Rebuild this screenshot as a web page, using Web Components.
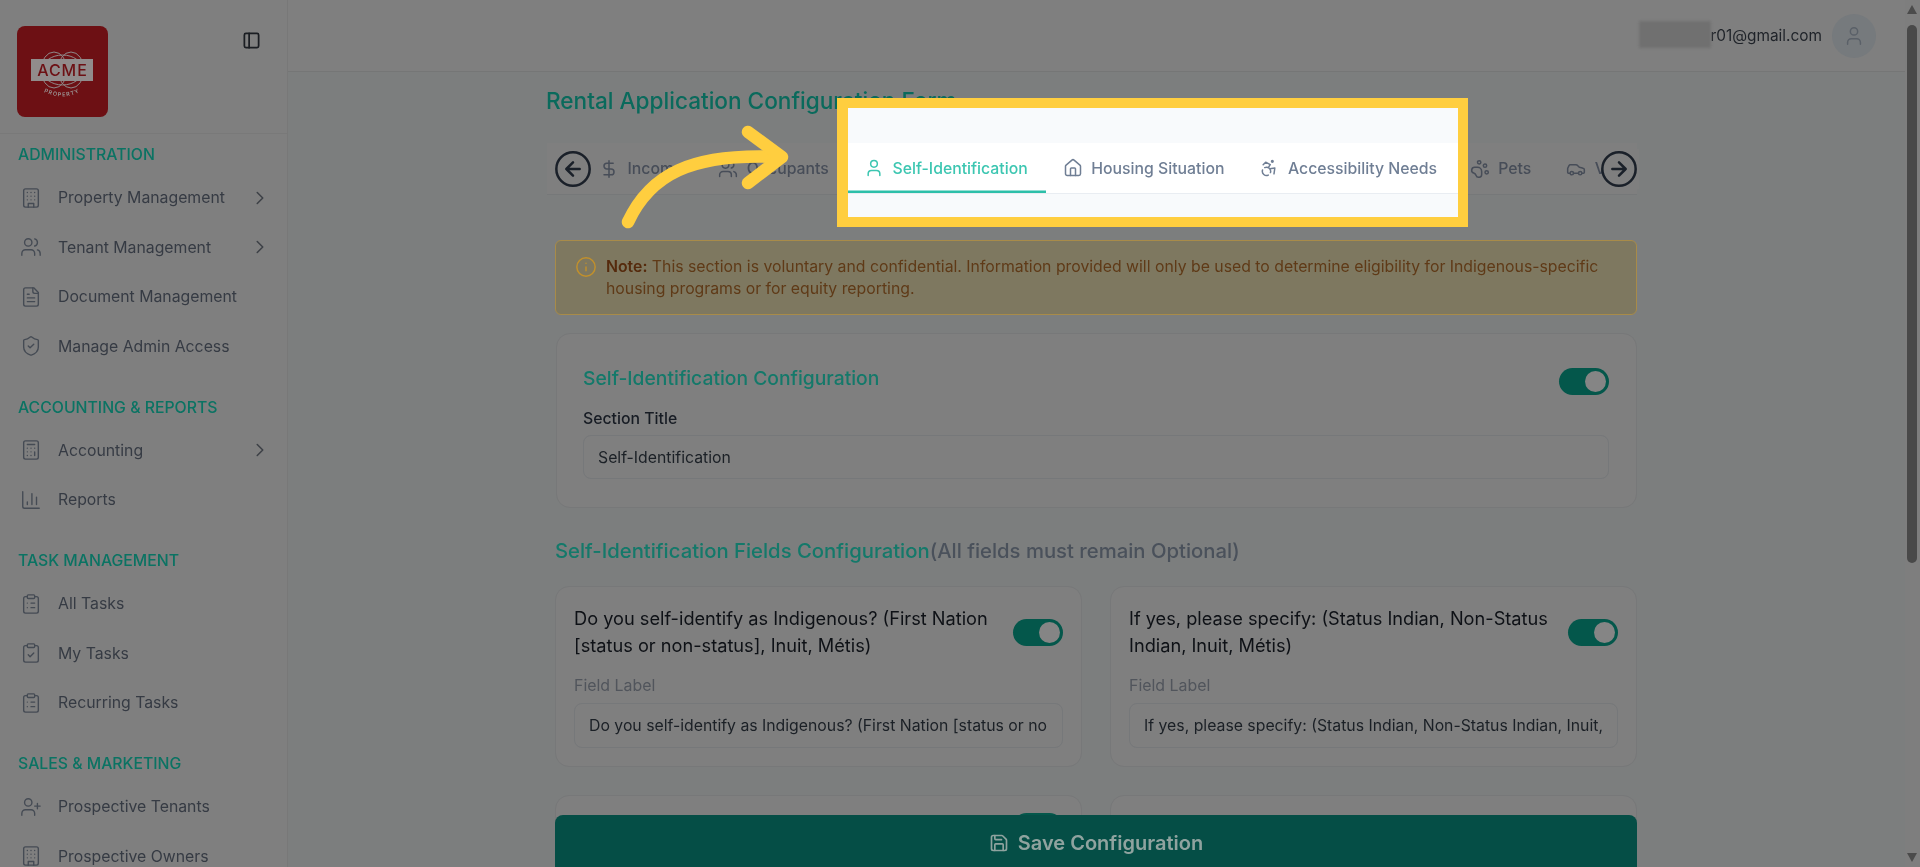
<!DOCTYPE html>
<html lang="en">
<head>
<meta charset="utf-8">
<title>Rental Application Configuration Form</title>
<style>
  html, body { margin: 0; height: 100%; overflow: hidden; background: #7c7e7e; }
  body { font-family: Inter, "Liberation Sans", sans-serif; filter: blur(0.35px); }
</style>
</head>
<body>
<app-shell>
  <app-sidebar slot="sidebar">
    <nav-section title="ADMINISTRATION">
      <nav-item icon="building" more>Property Management</nav-item>
      <nav-item icon="users" more>Tenant Management</nav-item>
      <nav-item icon="file">Document Management</nav-item>
      <nav-item icon="shield">Manage Admin Access</nav-item>
    </nav-section>
    <nav-section title="ACCOUNTING &amp; REPORTS">
      <nav-item icon="calculator" more>Accounting</nav-item>
      <nav-item icon="chart">Reports</nav-item>
    </nav-section>
    <nav-section title="TASK MANAGEMENT">
      <nav-item icon="clipboard">All Tasks</nav-item>
      <nav-item icon="clipcheck">My Tasks</nav-item>
      <nav-item icon="clipboard">Recurring Tasks</nav-item>
    </nav-section>
    <nav-section title="SALES &amp; MARKETING">
      <nav-item icon="userplus">Prospective Tenants</nav-item>
      <nav-item icon="building">Prospective Owners</nav-item>
    </nav-section>
  </app-sidebar>

  <app-header slot="header" email="r01@gmail.com"></app-header>

  <page-title>Rental Application Configuration Form</page-title>

  <tab-strip>
    <config-tab icon="dollar">Income</config-tab>
    <config-tab icon="users">Occupants</config-tab>
    <tab-gap></tab-gap>
    <config-tab icon="paw">Pets</config-tab>
    <config-tab icon="car">Vehicles</config-tab>
  </tab-strip>

  <note-banner><b>Note:</b> This section is voluntary and confidential. Information provided will only be used to determine eligibility for Indigenous-specific housing programs or for equity reporting.</note-banner>

  <section-card heading="Self-Identification Configuration" value="Self-Identification"></section-card>

  <fields-heading><span>Self-Identification Fields Configuration</span>(All fields must remain Optional)</fields-heading>

  <fields-grid>
    <field-card label="Do you self-identify as Indigenous? (First Nation [status or non-status], Inuit, Métis)"></field-card>
    <field-card label="If yes, please specify: (Status Indian, Non-Status Indian, Inuit, Métis)"></field-card>
    <field-card toggle></field-card>
    <field-card></field-card>
  </fields-grid>

  <save-bar slot="footer">Save Configuration</save-bar>
</app-shell>

<callout-frame>
  <config-tab icon="user" bright active>Self-Identification</config-tab>
  <config-tab icon="house" bright>Housing Situation</config-tab>
  <config-tab icon="accessibility" bright>Accessibility Needs</config-tab>
</callout-frame>

<script>
(function() {
  'use strict';

  var ICONS = {
    building: '<rect x="4" y="2" width="16" height="20" rx="2"/><path d="M9 22v-4h6v4M8 6h.01M16 6h.01M12 6h.01M12 10h.01M12 14h.01M16 10h.01M16 14h.01M8 10h.01M8 14h.01"/>',
    users: '<path d="M16 21v-2a4 4 0 0 0-4-4H6a4 4 0 0 0-4 4v2"/><circle cx="9" cy="7" r="4"/><path d="M22 21v-2a4 4 0 0 0-3-3.87M16 3.13a4 4 0 0 1 0 7.75"/>',
    file: '<path d="M15 2H6a2 2 0 0 0-2 2v16a2 2 0 0 0 2 2h12a2 2 0 0 0 2-2V7Z"/><path d="M14 2v4a2 2 0 0 0 2 2h4M10 9H8M16 13H8M16 17H8"/>',
    shield: '<path d="M20 13c0 5-3.5 7.5-7.66 8.95a1 1 0 0 1-.67-.01C7.5 20.5 4 18 4 13V6a1 1 0 0 1 1-1c2 0 4.5-1.2 6.24-2.72a1.17 1.17 0 0 1 1.52 0C14.51 3.81 17 5 19 5a1 1 0 0 1 1 1z"/><path d="m9 12 2 2 4-4"/>',
    calculator: '<rect x="4" y="2" width="16" height="20" rx="2"/><path d="M8 6h8M16 14v4M16 10h.01M12 10h.01M8 10h.01M12 14h.01M8 14h.01M12 18h.01M8 18h.01"/>',
    chart: '<path d="M3 3v16a2 2 0 0 0 2 2h16M18 17V9M13 17V5M8 17v-3"/>',
    clipboard: '<rect x="8" y="2" width="8" height="4" rx="1"/><path d="M16 4h2a2 2 0 0 1 2 2v14a2 2 0 0 1-2 2H6a2 2 0 0 1-2-2V6a2 2 0 0 1 2-2h2M12 11h4M12 16h4M8 11h.01M8 16h.01"/>',
    clipcheck: '<rect x="8" y="2" width="8" height="4" rx="1"/><path d="M16 4h2a2 2 0 0 1 2 2v14a2 2 0 0 1-2 2H6a2 2 0 0 1-2-2V6a2 2 0 0 1 2-2h2M9 14l2 2 4-4"/>',
    userplus: '<path d="M16 21v-2a4 4 0 0 0-4-4H6a4 4 0 0 0-4 4v2"/><circle cx="9" cy="7" r="4"/><path d="M19 8v6M22 11h-6"/>',
    user: '<path d="M19 21v-2a4 4 0 0 0-4-4H9a4 4 0 0 0-4 4v2"/><circle cx="12" cy="7" r="4"/>',
    chevron: '<path d="m9 18 6-6-6-6"/>',
    panel: '<rect x="3" y="3" width="18" height="18" rx="2"/><path d="M9 3v18"/>',
    dollar: '<path d="M12 2v20M17 5H9.5a3.5 3.5 0 0 0 0 7h5a3.5 3.5 0 0 1 0 7H6"/>',
    house: '<path d="M15 21v-8a1 1 0 0 0-1-1h-4a1 1 0 0 0-1 1v8"/><path d="M3 10a2 2 0 0 1 .709-1.528l7-5.999a2 2 0 0 1 2.582 0l7 5.999A2 2 0 0 1 21 10v9a2 2 0 0 1-2 2H5a2 2 0 0 1-2-2z"/>',
    accessibility: '<circle cx="16" cy="4" r="1"/><path d="m18 19 1-7-6 1M5 8l3-3 5.5 3-2.36 3.5M4.24 14.5a5 5 0 0 0 6.88 6M13.76 17.5a5 5 0 0 0-6.88-6"/>',
    paw: '<circle cx="11" cy="4" r="2"/><circle cx="18" cy="8" r="2"/><circle cx="20" cy="16" r="2"/><path d="M9 10a5 5 0 0 1 5 5v3.5a3.5 3.5 0 0 1-6.84 1.045Q6.52 17.48 4.46 16.84A3.5 3.5 0 0 1 5.5 10Z"/>',
    car: '<path d="M19 17h2c.6 0 1-.4 1-1v-3c0-.9-.7-1.7-1.5-1.9C18.7 10.6 16 10 16 10s-1.3-1.4-2.2-2.3c-.5-.4-1.1-.7-1.8-.7H5c-.6 0-1.1.4-1.4.9l-1.4 2.9A3.7 3.7 0 0 0 2 12v4c0 .6.4 1 1 1h2"/><circle cx="7" cy="17" r="2"/><path d="M9 17h6"/><circle cx="17" cy="17" r="2"/>',
    arrowleft: '<circle cx="12" cy="12" r="10"/><path d="m12 8-4 4 4 4M16 12H8"/>',
    arrowright: '<circle cx="12" cy="12" r="10"/><path d="m12 16 4-4-4-4M8 12h8"/>',
    info: '<circle cx="12" cy="12" r="10"/><path d="M12 16v-4M12 8h.01"/>',
    save: '<path d="M15.2 3a2 2 0 0 1 1.4.6l3.8 3.8a2 2 0 0 1 .6 1.4V19a2 2 0 0 1-2 2H5a2 2 0 0 1-2-2V5a2 2 0 0 1 2-2z"/><path d="M17 21v-7a1 1 0 0 0-1-1H8a1 1 0 0 0-1 1v7M7 3v4a1 1 0 0 0 1 1h7"/>'
  };

  function icon(name, size, width) {
    return '<svg xmlns="http://www.w3.org/2000/svg" width="' + size + '" height="' + size + '" viewBox="0 0 24 24" fill="none" stroke="currentColor" stroke-width="' + (width || 2) + '" stroke-linecap="round" stroke-linejoin="round" style="display:block;flex:none">' + ICONS[name] + '</svg>';
  }

  // small helper so each element below only declares its markup
  function define(tag, render, setup) {
    customElements.define(tag, class extends HTMLElement {
      constructor() {
        super();
        this.attachShadow({ mode: 'open' });
      }
      connectedCallback() {
        this.shadowRoot.innerHTML = render(this);
        if (setup) setup(this);
      }
    });
  }

  define('app-shell', function() {
    return '<style>' +
      ':host { display: grid; grid-template-columns: 288px 1fr 15px; grid-template-rows: 72px 1fr; height: 867px; overflow: hidden; color: #22272e; position: relative; }' +
      '.side { grid-row: 1 / 3; min-height: 0; overflow: hidden; }' +
      '.head { grid-column: 2; }' +
      '.main { grid-column: 2; grid-row: 2; padding: 0 268px 0 259px; min-height: 0; overflow: hidden; display: flex; flex-direction: column; }' +
      '::slotted(*) { flex: none; }' +
      '.bar { grid-column: 3; grid-row: 1 / 3; background: #7e7e7e; display: flex; flex-direction: column; align-items: center; position: relative; }' +
      '.up { margin: 5px 0 0 -1px; width: 0; height: 0; border: 5.5px solid transparent; border-top: 0; border-bottom: 9px solid #4b4b4b; }' +
      '.thumb { margin: 11px 0 0 -1px; width: 10px; height: 538px; border-radius: 5px; background: #494949; }' +
      '.down { position: absolute; left: 2px; bottom: 5px; width: 0; height: 0; border: 5.5px solid transparent; border-bottom: 0; border-top: 9px solid #4b4b4b; }' +
      '</style>' +
      '<div class="side"><slot name="sidebar"></slot></div>' +
      '<div class="head"><slot name="header"></slot></div>' +
      '<div class="main"><slot></slot></div>' +
      '<div class="bar"><div class="up"></div><div class="thumb"></div><div class="down"></div></div>' +
      '<slot name="footer"></slot>';
  });

  define('app-sidebar', function() {
    return '<style>' +
      ':host { display: block; height: 867px; background: #7f7f7f; border-right: 1px solid #787878; box-sizing: border-box; }' +
      '.top { height: 134px; box-sizing: border-box; border-bottom: 1px solid #797979; padding: 26px 0 0 17px; display: flex; justify-content: space-between; }' +
      '.logo { width: 91px; height: 91px; border-radius: 8px; display: block; }' +
      '.toggle { color: #1b1e23; margin: 5px 26px 0 0; }' +
      '</style>' +
      '<div class="top">' +
      '<svg class="logo" viewBox="0 0 91 91" font-family="Inter, Liberation Sans, sans-serif">' +
      '<rect width="91" height="91" fill="#6d1014"/>' +
      '<g fill="none" stroke="#8f8a8a" stroke-width="1"><ellipse cx="37" cy="44" rx="13" ry="18"/><ellipse cx="54" cy="44" rx="13" ry="18"/><ellipse cx="45.5" cy="44" rx="20" ry="15"/></g>' +
      '<rect x="14" y="33" width="62" height="22" fill="#918c8c"/>' +
      '<text x="45.5" y="50" text-anchor="middle" font-size="16" font-weight="500" letter-spacing="1" fill="#6d1014">ACME</text>' +
      '<path id="arc" d="M25 65 Q45 76 65 65" fill="none"/>' +
      '<text font-size="5.6" font-weight="600" letter-spacing="1" fill="#9a9292"><textPath href="#arc" startOffset="50%" text-anchor="middle">PROPERTY</textPath></text>' +
      '</svg>' +
      '<div class="toggle">' + icon('panel', 19, 2.2) + '</div>' +
      '</div><slot></slot>';
  });

  define('nav-section', function(el) {
    return '<style>' +
      ':host { display: block; padding-top: 11px; margin-bottom: 15.5px; }' +
      '.t { height: 19px; line-height: 19px; margin: 0 0 9px 18px; font-size: 15.8px; font-weight: 500; color: #0b7363; white-space: nowrap; }' +
      '</style><div class="t">' + el.getAttribute('title') + '</div><slot></slot>';
  });

  define('nav-item', function(el) {
    return '<style>' +
      ':host { display: flex; align-items: center; height: 49.5px; padding-left: 20px; font-size: 15.8px; color: #363b44; white-space: nowrap; }' +
      '.i { width: 22px; margin-right: 16px; color: #454b54; }' +
      '.c { position: absolute; left: 249px; color: #3d4147; }' +
      '</style><span class="i">' + icon(el.getAttribute('icon'), 22, 1.5) + '</span><slot></slot>' +
      (el.hasAttribute('more') ? '<span class="c">' + icon('chevron', 22, 1.7) + '</span>' : '');
  });

  define('app-header', function(el) {
    return '<style>' +
      ':host { display: flex; justify-content: flex-end; align-items: center; gap: 10px; height: 72px; box-sizing: border-box; background: #7f7f7f; border-bottom: 1px solid #757676; padding-right: 29px; }' +
      '.mail { position: relative; font-size: 15.4px; color: #1f2329; padding-left: 71px; }' +
      '.mail i { position: absolute; left: 0; top: -5px; width: 72px; height: 27px; background: #707070; filter: blur(1.5px); }' +
      '.av { width: 44px; height: 44px; border-radius: 50%; background: #767a7d; color: #5a6068; display: flex; align-items: center; justify-content: center; }' +
      '</style><span class="mail">' + el.getAttribute('email') + '<i></i></span>' +
      '<span class="av">' + icon('user', 22, 1.6) + '</span>';
  });

  define('page-title', function() {
    return '<style>' +
      ':host { display: block; margin: 14px 0 0 -1px; height: 29px; line-height: 29px; font-size: 22.6px; font-weight: 500; color: #0a6a5c; white-space: nowrap; }' +
      '</style><slot></slot>';
  });

  define('tab-strip', function() {
    return '<style>' +
      ':host { display: block; position: relative; margin-top: 28px; height: 52px; box-sizing: border-box; background: #7f7f7f; border-bottom: 1px solid #767879; }' +
      '.row { display: flex; height: 51px; padding-left: 35px; overflow: hidden; }' +
      'span { position: absolute; top: 6px; color: #1a2029; }' +
      '.l { left: 6px; }' +
      '.r { right: -2px; background: linear-gradient(to right, transparent 4px, #7f7f7f 4px); }' +
      '</style><div class="row"><slot></slot></div>' +
      '<span class="l">' + icon('arrowleft', 40, 1.5) + '</span>' +
      '<span class="r">' + icon('arrowright', 40, 1.5) + '</span>';
  });

  define('tab-gap', function() {
    return '<style>:host { display: block; flex: none; width: 606px; }</style>';
  });

  define('config-tab', function(el) {
    var active = el.hasAttribute('active');
    var bright = el.hasAttribute('bright');
    var color = active ? '#3cc6b1' : (bright ? '#6f7e94' : '#474d58');
    return '<style>' +
      ':host { display: flex; flex: none; align-items: center; gap: 8.5px; height: 100%; box-sizing: border-box; padding: 0 18px 0 17px; font-size: 15.8px; font-weight: 500; white-space: nowrap; color: ' + color + ';' +
      (active ? ' box-shadow: inset 0 -2.5px 0 #2dbfa9; margin-left: -1px;' : '') + ' }' +
      '</style>' + icon(el.getAttribute('icon'), 20, 1.8) + '<slot></slot>';
  });

  define('note-banner', function() {
    return '<style>' +
      ':host { display: flex; gap: 9px; margin: 45px 0 0 8px; padding: 15px 24px 0 19px; height: 75px; box-sizing: border-box; background: #7e7860; border: 1px solid #a88b49; border-radius: 6px; font-size: 15.8px; line-height: 22px; color: #5f3a17; }' +
      '.i { color: #c1902c; }' +
      '::slotted(b) { color: #552a0c; font-weight: 600; }' +
      '</style><span class="i">' + icon('info', 22, 1.6) + '</span><div><slot></slot></div>';
  });

  define('toggle-switch', function() {
    return '<style>' +
      ':host { display: block; flex: none; width: 50px; height: 27px; border-radius: 14px; background: #04574b; position: relative; }' +
      'i { position: absolute; right: 3px; top: 3px; width: 21px; height: 21px; border-radius: 50%; background: #858585; }' +
      '</style><i></i>';
  });

  define('section-card', function(el) {
    return '<style>' +
      ':host { display: block; margin: 18px 0 0 9px; height: 175px; box-sizing: border-box; background: #7f7f7f; border: 1px solid #777879; border-radius: 14px; padding: 34px 27px 0 26px; }' +
      '.top { display: flex; justify-content: space-between; height: 30px; }' +
      'h2 { margin: 0; font-size: 19.3px; line-height: 20px; font-weight: 500; color: #14796a; }' +
      'label { display: block; margin-top: 11px; font-size: 15.8px; line-height: 20px; font-weight: 500; color: #171c24; }' +
      'input { display: block; width: 100%; height: 44px; box-sizing: border-box; margin-top: 6px; padding: 0 14px; background: #7f7f7f; border: 1px solid #76787a; border-radius: 8px; font: 15.8px Inter, "Liberation Sans", sans-serif; color: #1b2026; outline: none; }' +
      '</style><div class="top"><h2>' + el.getAttribute('heading') + '</h2><toggle-switch></toggle-switch></div>' +
      '<label>Section Title</label><input value="' + el.getAttribute('value') + '">';
  });

  define('fields-heading', function() {
    return '<style>' +
      ':host { display: block; margin: 32px 0 0 8px; height: 22px; line-height: 22px; font-size: 20.3px; font-weight: 500; color: #4a515b; white-space: nowrap; }' +
      '::slotted(span) { color: #14796a; }' +
      '</style><slot></slot>';
  });

  define('fields-grid', function() {
    return '<style>' +
      ':host { display: grid; grid-template-columns: 1fr 1fr; gap: 28px; margin: 24px 0 0 8px; }' +
      '</style><slot></slot>';
  });

  define('field-card', function(el) {
    var label = el.getAttribute('label');
    var body = label ?
      '<div class="top"><p>' + label + '</p><toggle-switch></toggle-switch></div><label>Field Label</label><input>' :
      (el.hasAttribute('toggle') ? '<div class="top end"><toggle-switch></toggle-switch></div>' : '');
    return '<style>' +
      ':host { display: block; height: 181px; box-sizing: border-box; background: #7f7f7f; border: 1px solid #777879; border-radius: 14px; padding: 18px 18px 0; }' +
      '.top { display: flex; align-items: center; justify-content: space-between; gap: 20px; height: 54px; }' +
      '.end { justify-content: flex-end; align-items: flex-start; margin-top: -1px; }' +
      'p { margin: 0; font-size: 18.2px; line-height: 27px; color: #0e1116; }' +
      'label { display: block; margin-top: 17px; font-size: 15.9px; line-height: 20px; color: #51555c; }' +
      'input { display: block; width: 100%; height: 45px; box-sizing: border-box; margin-top: 7px; padding: 0 14px; background: #7f7f7f; border: 1px solid #76787a; border-radius: 8px; font: 15.8px Inter, "Liberation Sans", sans-serif; color: #1b2026; outline: none; }' +
      '</style>' + body;
  }, function(el) {
    var input = el.shadowRoot.querySelector('input');
    if (input) input.value = el.getAttribute('label');
  });

  // sticky save button, lies over the cards
  define('save-bar', function() {
    return '<style>' +
      ':host { position: absolute; left: 555px; top: 815px; width: 1082px; height: 60px; box-sizing: border-box; padding-bottom: 4px; background: #054e46; border-radius: 8px; display: flex; align-items: center; justify-content: center; gap: 9px; font-size: 20px; font-weight: 600; color: #8fa39f; }' +
      '</style>' + icon('save', 20) + '<slot></slot>';
  });

  // yellow highlight box drawn over the page, with the curved arrow pointing at it
  define('callout-frame', function() {
    return '<style>' +
      ':host { position: absolute; left: 837px; top: 98px; width: 631px; height: 129px; box-sizing: border-box; border: solid #ffce3f; border-width: 10px 10px 10px 11px; background: #f8fafc; }' +
      '.row { display: flex; margin-top: 35px; height: 51px; box-sizing: border-box; background: #fff; border-bottom: 1px solid #e9edf2; overflow: hidden; }' +
      'svg { position: absolute; left: -228px; top: 12px; overflow: visible; }' +
      '</style><div class="row"><slot></slot></div>' +
      '<svg width="170" height="110" viewBox="0 0 170 110" fill="none" stroke="#ffce3f" stroke-width="12.5" stroke-linecap="round" stroke-linejoin="round">' +
      '<path d="M8 102C30 55 70 33 158 37"/><path d="M128 12l34 25-34 26"/></svg>';
  });
})();
</script>
</body>
</html>
